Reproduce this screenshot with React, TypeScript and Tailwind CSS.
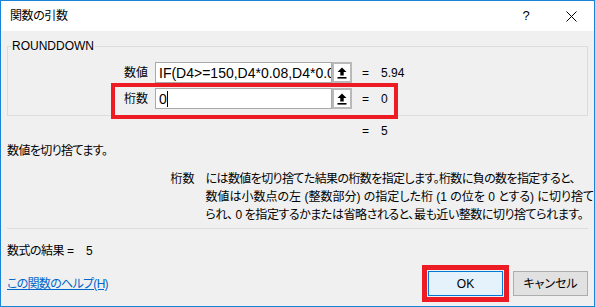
import React from 'react';

function RefButton() {
  return (
    <div className="w-[20px] h-[21px] shrink-0 border-2 border-[#b9b9b9] bg-white flex items-center justify-center">
      <svg width="10" height="12" viewBox="0 0 10 12">
        <path d="M5 0.5 L9.5 5 H6.7 V8.6 H3.3 V5 H0.5 Z" fill="#000" />
        <rect x="0.5" y="10" width="9" height="1.6" fill="#000" />
      </svg>
    </div>
  );
}

interface RowProps {
  label: string;
  value: string;
  result: string;
  caret?: boolean;
}

function ArgRow({ label, value, result, caret }: RowProps) {
  return (
    <div className="flex items-center h-[21px]">
      <div className="w-[140px] text-right leading-[16px]">{label}</div>
      <div className="ml-[7px] w-[177px] h-full shrink-0 border border-[#a9a9a9] bg-white flex items-center pl-[3px] overflow-hidden whitespace-nowrap text-[14px] leading-[18px]">
        {value}
        {caret && <span className="inline-block w-px h-[16px] bg-black" />}
      </div>
      <RefButton />
      <span className="ml-[10px] leading-[16px]">=</span>
      <span className="ml-[12px] leading-[16px]">{result}</span>
    </div>
  );
}

export default function App() {
  return (
    <div className="w-[595px] h-[307px] border border-[#1883d7] bg-[#f0f0f0] flex flex-col overflow-hidden text-[12px] text-black font-['Liberation_Sans','Noto_Sans_CJK_JP',sans-serif] [font-feature-settings:'palt']">
      {/* title bar */}
      <div className="h-[30px] shrink-0 bg-white flex items-center">
        <span className="ml-[9px] leading-[16px] tracking-[-0.4px]">関数の引数</span>
        <div className="ml-auto flex h-full">
          <div className="w-[44px] flex items-center justify-center text-[13px]">?</div>
          <div className="w-[46px] flex items-center justify-center">
            <svg width="11" height="11" viewBox="0 0 11 11">
              <path d="M0.5 0.5 L10.5 10.5 M10.5 0.5 L0.5 10.5" stroke="#000" strokeWidth="1" />
            </svg>
          </div>
        </div>
      </div>

      {/* arguments group */}
      <fieldset className="mx-[6px] mt-[7px] border border-[#dcdcdc] pb-[6px]">
        <legend className="ml-[3px] px-[1px] leading-[16px]">ROUNDDOWN</legend>
        <div className="mt-[8px] flex flex-col gap-[5px]">
          <ArgRow label="数値" value="IF(D4>=150,D4*0.08,D4*0.06)" result="5.94" />
          <div className="relative">
            <ArgRow label="桁数" value="0" result="0" caret />
            <span className="absolute left-[103px] top-[-5px] w-[287px] h-[36px] border-[4px] border-[#ed1c24] z-10" />
          </div>
        </div>
      </fieldset>

      <div className="mt-[7px] pl-[361px] leading-[16px]">
        =<span className="ml-[12px]">5</span>
      </div>

      <div className="mt-[4px] ml-[6px] leading-[16px] tracking-[-0.6px]">数値を切り捨てます。</div>

      <div className="mt-[11px] flex">
        <div className="w-[202px] text-right leading-[18px]">桁数</div>
        <div className="ml-[11px] flex flex-col leading-[18px] whitespace-nowrap">
          <span className="tracking-[-0.6px]">には数値を切り捨てた結果の桁数を指定します。桁数に負の数を指定すると、</span>
          <span>数値は小数点の左 (整数部分) の指定した桁 (1 の位を 0 とする) に切り捨て</span>
          <span className="tracking-[-0.45px]">られ、 0 を指定するかまたは省略されると、最も近い整数に切り捨てられます。</span>
        </div>
      </div>

      <div className="mt-[4px] mx-[6px] h-px bg-[#dcdcdc]" />

      <div className="mt-[14px] ml-[6px] leading-[16px]">
        <span className="tracking-[-0.5px]">数式の結果</span>
        <span className="ml-[3px]">=</span>
        <span className="ml-[12px]">5</span>
      </div>

      <div className="mt-[12px] h-[25px] flex items-center">
        <a className="ml-[6px] leading-[16px] text-[#0066cc] underline tracking-[-0.7px]">この関数のヘルプ(H)</a>
        <div className="ml-auto mr-[6px] flex gap-[10px]">
          <div className="relative">
            <button className="w-[75px] h-[25px] border border-[#0078d7] bg-[#e5f1fb] flex items-center justify-center leading-[16px]">
              OK
            </button>
            <span className="absolute -inset-[6px] border-[5px] border-[#ed1c24]" />
          </div>
          <button className="w-[75px] h-[25px] border border-[#adadad] bg-[#e1e1e1] flex items-center justify-center leading-[16px]">
            キャンセル
          </button>
        </div>
      </div>
    </div>
  );
}
